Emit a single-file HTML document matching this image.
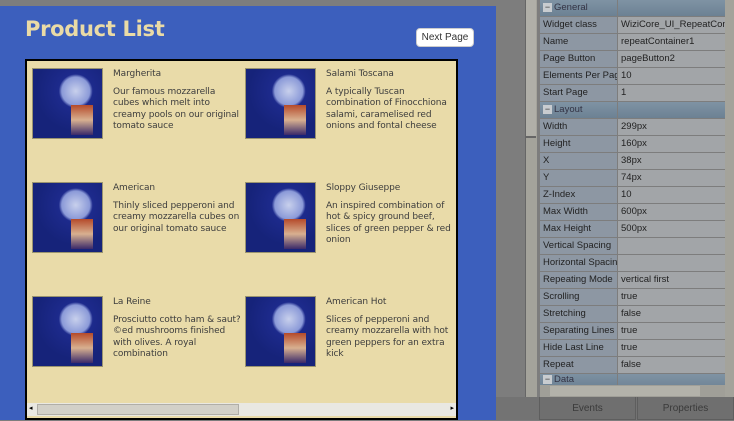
<!DOCTYPE html>
<html><head><style>
*{margin:0;padding:0;box-sizing:border-box}
body{width:734px;height:420px;overflow:hidden;background:#7d7d7d;font-family:"DejaVu Sans","Liberation Sans",sans-serif;position:relative}
.a{position:absolute}
#blue{left:0;top:6px;width:496px;height:414px;background:#3c5fbd}
h1{position:absolute;left:25px;top:17px;font-size:21px;font-weight:bold;color:#eadba6;font-family:"DejaVu Sans",sans-serif;letter-spacing:-0.3px}
#btn{left:416px;top:28px;width:58px;height:19px;background:#fff;border:1px solid #ccc;border-radius:4px;font-size:10px;color:#333;text-align:center;line-height:17px;font-family:"Liberation Sans",sans-serif}
#box{left:25px;top:59px;width:433px;height:361px;background:#e9dba9;border:2px solid #000}
.img{position:absolute;width:71px;height:71px;background:radial-gradient(circle at 62% 32%,#c8d0ec 0,#8b9ad8 14px,#1d2a8c 17px,#16237a 40px);border:1px solid #9a9470}
.img::after{content:"";position:absolute;left:38px;top:36px;width:22px;height:30px;background:linear-gradient(#b54a2a,#d8b090 50%,#3a2a6a)}
.t{position:absolute;font-size:9px;color:#3d3d3d;line-height:11.5px;white-space:nowrap;letter-spacing:-0.1px}
.t b{font-weight:normal;display:block;margin-bottom:6px}
#hs{left:27px;top:403px;width:429px;height:13px;background:#e9e8e2}
#hs .th{position:absolute;left:10px;top:1px;width:202px;height:11px;background:#d2d0c8;border:1px solid #b0aea8}
.pg{left:540px;width:185px;height:17px;font-family:"Liberation Sans",sans-serif;font-size:9.5px;color:#222;line-height:16px}
.pg .l{position:absolute;left:0;width:77px;height:16px;background:#8d97a3;padding-left:3px;white-space:nowrap;overflow:hidden}
.pg .v{position:absolute;left:78px;width:107px;height:16px;background:#a2a5a8;padding-left:3px;white-space:nowrap;overflow:hidden}
.pg.h .l,.pg.h .v{background:linear-gradient(#7f93a4,#6c8193)}
.pg.h .l{padding-left:14px;color:#334}
.pg.h .l::before{content:"−";position:absolute;left:3px;top:3px;width:9px;height:9px;background:#c8ccd0;font-size:9px;line-height:9px;text-align:center;color:#333}
</style></head><body>
<div id="blue" class="a"></div>
<h1>Product List</h1>
<div id="btn" class="a">Next Page</div>
<div id="box" class="a">
<div class="img" style="left:5px;top:7px"></div>
<div class="t" style="left:86px;top:8px"><b>Margherita</b>Our famous mozzarella<br>cubes which melt into<br>creamy pools on our original<br>tomato sauce</div>
<div class="img" style="left:218px;top:7px"></div>
<div class="t" style="left:299px;top:8px"><b>Salami Toscana</b>A typically Tuscan<br>combination of Finocchiona<br>salami, caramelised red<br>onions and fontal cheese</div>
<div class="img" style="left:5px;top:121px"></div>
<div class="t" style="left:86px;top:122px"><b>American</b>Thinly sliced pepperoni and<br>creamy mozzarella cubes on<br>our original tomato sauce</div>
<div class="img" style="left:218px;top:121px"></div>
<div class="t" style="left:299px;top:122px"><b>Sloppy Giuseppe</b>An inspired combination of<br>hot &amp; spicy ground beef,<br>slices of green pepper &amp; red<br>onion</div>
<div class="img" style="left:5px;top:235px"></div>
<div class="t" style="left:86px;top:236px"><b>La Reine</b>Prosciutto cotto ham &amp; saut?<br>©ed mushrooms finished<br>with olives. A royal<br>combination</div>
<div class="img" style="left:218px;top:235px"></div>
<div class="t" style="left:299px;top:236px"><b>American Hot</b>Slices of pepperoni and<br>creamy mozzarella with hot<br>green peppers for an extra<br>kick</div>
</div>
<div id="hs" class="a"><div class="th"></div><span style="position:absolute;left:2px;top:1px;font-size:7px">◂</span><span style="position:absolute;right:2px;top:1px;font-size:7px">▸</span></div>
<div class="a" style="left:525px;top:0;width:12px;height:397px;background:#a4a39b;border-left:1px solid #666"></div>
<div class="a" style="left:526px;top:0;width:10px;height:138px;background:#b0afa8;border-bottom:2px solid #666"></div>
<div class="a" style="left:725px;top:0;width:9px;height:397px;background:#a4a39b"></div>
<div class="a" style="left:540px;top:385px;width:185px;height:12px;background:#a09f98"><div style="position:absolute;left:10px;top:1px;width:150px;height:10px;background:#b3b2aa"></div></div>
<div class="pg a h" style="top:0"><div class="l">General</div><div class="v"></div></div>
<div class="pg a" style="top:17px"><div class="l">Widget class</div><div class="v">WiziCore_UI_RepeatConta</div></div>
<div class="pg a" style="top:34px"><div class="l">Name</div><div class="v">repeatContainer1</div></div>
<div class="pg a" style="top:51px"><div class="l">Page Button</div><div class="v">pageButton2</div></div>
<div class="pg a" style="top:68px"><div class="l">Elements Per Page</div><div class="v">10</div></div>
<div class="pg a" style="top:85px"><div class="l">Start Page</div><div class="v">1</div></div>
<div class="pg a h" style="top:102px"><div class="l">Layout</div><div class="v"></div></div>
<div class="pg a" style="top:119px"><div class="l">Width</div><div class="v">299px</div></div>
<div class="pg a" style="top:136px"><div class="l">Height</div><div class="v">160px</div></div>
<div class="pg a" style="top:153px"><div class="l">X</div><div class="v">38px</div></div>
<div class="pg a" style="top:170px"><div class="l">Y</div><div class="v">74px</div></div>
<div class="pg a" style="top:187px"><div class="l">Z-Index</div><div class="v">10</div></div>
<div class="pg a" style="top:204px"><div class="l">Max Width</div><div class="v">600px</div></div>
<div class="pg a" style="top:221px"><div class="l">Max Height</div><div class="v">500px</div></div>
<div class="pg a" style="top:238px"><div class="l">Vertical Spacing</div><div class="v"></div></div>
<div class="pg a" style="top:255px"><div class="l">Horizontal Spacing</div><div class="v"></div></div>
<div class="pg a" style="top:272px"><div class="l">Repeating Mode</div><div class="v">vertical first</div></div>
<div class="pg a" style="top:289px"><div class="l">Scrolling</div><div class="v">true</div></div>
<div class="pg a" style="top:306px"><div class="l">Stretching</div><div class="v">false</div></div>
<div class="pg a" style="top:323px"><div class="l">Separating Lines</div><div class="v">true</div></div>
<div class="pg a" style="top:340px"><div class="l">Hide Last Line</div><div class="v">true</div></div>
<div class="pg a" style="top:357px"><div class="l">Repeat</div><div class="v">false</div></div>
<div class="pg a h" style="top:374px;height:11px;overflow:hidden"><div class="l" style="top:-2px">Data</div><div class="v"></div></div>
<div class="a" style="left:496px;top:397px;width:238px;height:23px;background:#737373"></div>
<div class="a" style="left:539px;top:397px;width:97px;height:23px;background:#6f6f6f;border:1px solid #5e5e5e;border-top:none;font:10px 'Liberation Sans',sans-serif;color:#3a3a3a;text-align:center;line-height:24px">Events</div>
<div class="a" style="left:637px;top:397px;width:97px;height:23px;background:#6f6f6f;border:1px solid #5e5e5e;border-top:none;font:10px 'Liberation Sans',sans-serif;color:#3a3a3a;text-align:center;line-height:24px">Properties</div>
</body></html>
